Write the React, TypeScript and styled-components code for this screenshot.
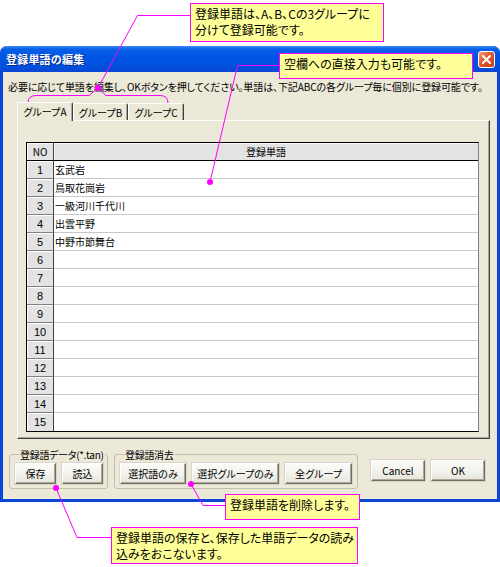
import { Fragment } from 'react';
import styled, { createGlobalStyle } from 'styled-components';

const GlobalStyle = createGlobalStyle`
  html, body {
    margin: 0;
    padding: 0;
    background: #ffffff;
  }
  body {
    font-family: "Noto Sans CJK JP", "Liberation Sans", sans-serif;
    color: #000000;
  }
`;

const jp = `"Noto Sans CJK JP", "Liberation Sans", sans-serif`;

const PageStyle = styled.div`
  position: relative;
  width: 500px;
  height: 567px;
  padding-top: 46px;
  box-sizing: border-box;
  overflow: hidden;
  background: #ffffff;
`;

const WindowStyle = styled.div`
  width: 500px;
  height: 456px;
  box-sizing: border-box;
  padding: 0 3px 3px 3px;
  background: #0a45d6;
  border-radius: 7px 7px 0 0;
  display: flex;
  flex-direction: column;
`;

const TitleBarStyle = styled.div`
  height: 26px;
  margin: 0 -3px;
  padding: 0 5px 0 6px;
  border-radius: 7px 7px 0 0;
  background: linear-gradient(to bottom, #3c8cf8 0%, #0a5fe8 12%, #0055e5 40%, #0050dc 80%, #0a45d6 100%);
  display: flex;
  align-items: center;
  justify-content: space-between;
`;

const TitleText = styled.span`
  font-family: ${jp};
  font-size: 11px;
  font-weight: bold;
  color: #ffffff;
  letter-spacing: 0.2px;
  text-shadow: 1px 1px 0 #0a2a8a;
`;

const CloseButton = styled.div`
  width: 15px;
  height: 15px;
  border: 1px solid #ffffff;
  border-radius: 3px;
  background: linear-gradient(135deg, #f09a7c 0%, #e0582f 45%, #c63d16 100%);
  display: flex;
  align-items: center;
  justify-content: center;
`;

const ClientStyle = styled.div`
  flex: 1;
  background: #ece9d8;
  display: flex;
  flex-direction: column;
`;

const Instruction = styled.div`
  margin: 9px 0 0 5px;
  font-family: ${jp};
  font-size: 10px;
  line-height: 12px;
  font-feature-settings: "palt";
  letter-spacing: -0.1px;
  white-space: nowrap;
`;

const TabArea = styled.div`
  margin: 8px 7px 0 14px;
  display: flex;
  flex-direction: column;
`;

const TabStrip = styled.div`
  height: 19px;
  display: flex;
  align-items: flex-end;
`;

const Tab = styled.div<{ $active?: boolean; $width: number }>`
  width: ${p => p.$width}px;
  height: ${p => (p.$active ? 19 : 17)}px;
  box-sizing: border-box;
  margin-bottom: ${p => (p.$active ? -1 : 0)}px;
  position: relative;
  z-index: ${p => (p.$active ? 2 : 1)};
  background: #ece9d8;
  border-top: 1px solid #ffffff;
  border-left: 1px solid #ffffff;
  border-right: 1px solid #404040;
  box-shadow: inset -1px 0 0 #aca899;
  border-radius: 2px 2px 0 0;
  display: flex;
  align-items: center;
  justify-content: center;
  font-family: ${jp};
  font-size: 10px;
  font-feature-settings: "palt";
  padding-bottom: ${p => (p.$active ? 1 : 0)}px;
`;

const Panel = styled.div`
  height: 319px;
  box-sizing: border-box;
  border-top: 1px solid #ffffff;
  border-left: 1px solid #ffffff;
  border-right: 1px solid #404040;
  border-bottom: 1px solid #404040;
  box-shadow: inset -1px -1px 0 #aca899;
  padding: 21px 10px 0 8px;
`;

const Grid = styled.div`
  display: grid;
  grid-template-columns: 27px 1fr;
  grid-auto-rows: 18px;
  border-top: 1px solid #000000;
  border-left: 1px solid #000000;
  border-right: 1px solid #808080;
  border-bottom: 1px solid #000000;
  background: #ffffff;
`;

const HeadCell = styled.div<{ $first?: boolean }>`
  background: #e3e3e3;
  border-bottom: 1px solid #000000;
  border-right: ${p => (p.$first ? '1px solid #404040' : 'none')};
  box-shadow: inset 1px 1px 0 #f8f8f8;
  display: flex;
  align-items: center;
  justify-content: center;
  font-family: ${jp};
  font-size: 10px;
`;

const NoCell = styled.div<{ $last?: boolean }>`
  background: #e3e3e3;
  border-right: 1px solid #404040;
  border-bottom: ${p => (p.$last ? 'none' : '1px solid #808080')};
  box-shadow: inset 1px 1px 0 #ffffff;
  display: flex;
  align-items: center;
  justify-content: center;
  font-family: "Liberation Sans", sans-serif;
  font-size: 11px;
`;

const WordCell = styled.div<{ $last?: boolean }>`
  border-bottom: ${p => (p.$last ? 'none' : '1px solid #c8c8c8')};
  display: flex;
  align-items: center;
  padding-left: 1px;
  font-family: ${jp};
  font-size: 10px;
`;

const BottomRow = styled.div`
  margin: 10px 0 0 6px;
  display: flex;
  align-items: flex-start;
`;

const GroupBox = styled.fieldset<{ $width: number }>`
  width: ${p => p.$width}px;
  min-width: 0;
  min-inline-size: 0;
  height: 40px;
  box-sizing: border-box;
  margin: 0 6px 0 0;
  padding: 3px 5px 0 5px;
  border: 1px solid #c2bfae;
  border-radius: 3px;
  display: flex;
  gap: 6px;
`;

const Legend = styled.legend`
  margin-left: 4px;
  padding: 0 1px;
  font-family: ${jp};
  font-size: 10px;
  line-height: 11px;
  font-feature-settings: "palt";
  letter-spacing: -0.3px;
  white-space: nowrap;
`;

const Button = styled.div<{ $width: number }>`
  width: ${p => p.$width}px;
  flex: none;
  height: 21px;
  box-sizing: border-box;
  background: linear-gradient(to bottom, #fbfbf8 0%, #f1f0ea 60%, #e6e4da 100%);
  border-top: 1px solid #ffffff;
  border-left: 1px solid #ffffff;
  border-right: 1px solid #716f64;
  border-bottom: 1px solid #716f64;
  box-shadow: inset -1px -1px 0 #aca899, 0 0 0 1px #d8d6cc;
  display: flex;
  align-items: center;
  justify-content: center;
  font-family: ${jp};
  font-size: 10px;
  font-feature-settings: "palt";
  white-space: nowrap;
`;

const DialogButtons = styled.div`
  margin: 11px 0 0 7px;
  display: flex;
  gap: 6px;
`;

const Overlay = styled.svg`
  position: absolute;
  left: 0;
  top: 0;
  pointer-events: none;
`;

const Callout = styled.div<{ $x: number; $y: number; $w: number; $h: number }>`
  position: absolute;
  left: ${p => p.$x}px;
  top: ${p => p.$y}px;
  width: ${p => p.$w}px;
  height: ${p => p.$h}px;
  box-sizing: border-box;
  background: #ffff99;
  border: 1px solid #ff00ff;
  padding: 2px 4px;
  font-family: ${jp};
  font-size: 12px;
  line-height: 16px;
  font-feature-settings: "palt";
  white-space: nowrap;
`;

const words = ['玄武岩', '鳥取花崗岩', '一級河川千代川', '出雲平野', '中野市節舞台'];
const rows = Array.from({ length: 15 }, (_, i) => words[i] ?? '');

const App = () => {
  return (
    <PageStyle>
      <GlobalStyle />
      <WindowStyle>
        <TitleBarStyle>
          <TitleText>登録単語の編集</TitleText>
          <CloseButton>
            <svg width="9" height="9" viewBox="0 0 9 9">
              <path d="M1 1 L8 8 M8 1 L1 8" stroke="#ffffff" strokeWidth="2" strokeLinecap="square" />
            </svg>
          </CloseButton>
        </TitleBarStyle>

        <ClientStyle>
          <Instruction>
            必要に応じて単語を編集し、OKボタンを押してください。単語は、下記ABCの各グループ毎に個別に登録可能です。
          </Instruction>

          <TabArea>
            <TabStrip>
              <Tab $active $width={56}>グループA</Tab>
              <Tab $width={55}>グループB</Tab>
              <Tab $width={56}>グループC</Tab>
            </TabStrip>
            <Panel>
              <Grid>
                <HeadCell $first>NO</HeadCell>
                <HeadCell>登録単語</HeadCell>
                {rows.map((w, i) => (
                  <Fragment key={i}>
                    <NoCell $last={i === 14}>{i + 1}</NoCell>
                    <WordCell $last={i === 14}>{w}</WordCell>
                  </Fragment>
                ))}
              </Grid>
            </Panel>
          </TabArea>

          <BottomRow>
            <GroupBox $width={99}>
              <Legend>登録語データ(*.tan)</Legend>
              <Button $width={41}>保存</Button>
              <Button $width={41}>読込</Button>
            </GroupBox>
            <GroupBox $width={244}>
              <Legend>登録語消去</Legend>
              <Button $width={66}>選択語のみ</Button>
              <Button $width={87}>選択グループのみ</Button>
              <Button $width={67}>全グループ</Button>
            </GroupBox>
            <DialogButtons>
              <Button $width={54}>Cancel</Button>
              <Button $width={54}>OK</Button>
            </DialogButtons>
          </BottomRow>
        </ClientStyle>
      </WindowStyle>

      <Overlay width="500" height="567" viewBox="0 0 500 567">
        <g stroke="#ff00ff" strokeWidth="1" fill="none">
          <path d="M190 15.5 H137.5 L98 88" />
          <path d="M28 103 Q28 95.5 36 95.5 H89 L98 88 L106 95.5 H160 Q168 95.5 168 103" />
          <path d="M279 65.5 H237.5 L210 182" />
          <path d="M191 484 L203 505.5 H225" />
          <path d="M56 488 L77 537.5 H111" />
        </g>
        <g fill="#ff00ff">
          <circle cx="98" cy="88" r="3" />
          <circle cx="210" cy="182" r="3" />
          <circle cx="191" cy="484" r="3" />
          <circle cx="56" cy="488" r="3" />
        </g>
      </Overlay>

      <Callout $x={190} $y={3} $w={194} $h={39}>
        登録単語は、A、B、Cの3グループに
        <br />
        分けて登録可能です。
      </Callout>
      <Callout $x={279} $y={53} $w={194} $h={26}>
        空欄への直接入力も可能です。
      </Callout>
      <Callout $x={225} $y={494} $w={135} $h={26}>
        登録単語を削除します。
      </Callout>
      <Callout $x={111} $y={527} $w={247} $h={37}>
        登録単語の保存と、保存した単語データの読み
        <br />
        込みをおこないます。
      </Callout>
    </PageStyle>
  );
};

export default App;
